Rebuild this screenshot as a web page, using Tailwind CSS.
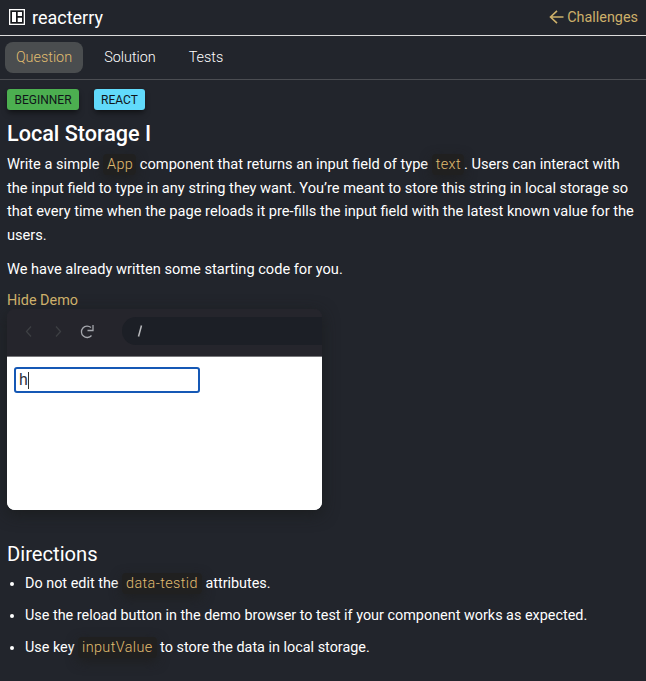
<!DOCTYPE html>
<html lang="en">
<head>
<meta charset="utf-8">
<title>reacterry</title>
<script src="https://cdn.jsdelivr.net/npm/@tailwindcss/browser@4"></script>
</head>
<body class="bg-[#22252c] text-white font-[Roboto,sans-serif] text-[14.4px] h-[681px] overflow-hidden">
<header class="h-9 border-b border-[#dcdcdc] flex items-center justify-between pl-[9px] pr-2">
  <div class="flex items-center gap-[7px]">
    <svg class="w-4 h-4 mb-px" viewBox="0 0 16 16"><path fill="#fff" d="M0 0h16v16H0z"/><path fill="#15171b" d="M1.300 1.300h13.400v13.400H1.300z"/><path fill="#fff" d="M3 3h4v10H3zM8.700 3H13v4H8.700zM8.700 8.700H13V13H8.700z"/></svg>
    <span class="text-[18px] leading-9">reacterry</span>
  </div>
  <a class="flex items-center gap-[3px] text-[#cdb06a] text-[14.4px]">
    <svg class="w-[15px] h-[14px]" viewBox="0 0 15 14" fill="none" stroke="currentColor" stroke-width="1.6"><path d="M14.500 7H1.500M8 .8L1.500 7L8 13.200"/></svg>
    <span>Challenges</span>
  </a>
</header>
<nav class="h-11 border-b border-[#4b4d52] flex items-center pl-[5px] font-light">
  <a class="w-[78px] h-[31px] rounded-lg bg-[#4a4d4f] text-[#e0bd70] flex items-center justify-center">Question</a>
  <a class="w-[94px] text-center text-white">Solution</a>
  <a class="w-[58px] text-center text-white">Tests</a>
</nav>
<main class="pl-[7px] pr-[7px] pt-[9px]">
  <div class="flex gap-[15px] text-[12px] text-[#10151a]">
    <span class="w-[72px] h-[21px] rounded-[3px] bg-[#4caf50] flex items-center justify-center shadow-md shadow-black/40">BEGINNER</span>
    <span class="w-[51px] h-[21px] rounded-[3px] bg-[#61dafb] flex items-center justify-center shadow-md shadow-black/40">REACT</span>
  </div>
  <h1 class="mt-[10px] h-7 leading-7 text-[21.6px] font-medium">Local Storage I</h1>
  <p class="mt-[5.3px] leading-[23.4px] text-[14.62px] whitespace-nowrap">Write a simple <code class="font-[Roboto,sans-serif] font-light text-[14.4px] tracking-[0.4px] text-[#e0bd70] bg-[#202020] rounded pl-1 pr-[3px] py-[2px] shadow-[0_4px_12px_rgba(30,30,30,0.8)]">App</code> component that returns an input field of type <code class="font-[Roboto,sans-serif] font-light text-[14.4px] tracking-[0.4px] text-[#e0bd70] bg-[#202020] rounded pl-1 pr-[3px] py-[2px] shadow-[0_4px_12px_rgba(30,30,30,0.8)]">text</code>. Users can interact with<br>the input field to type in any string they want. You’re meant to store this string in local storage so<br>that every time when the page reloads it pre-fills the input field with the latest known value for the<br>users.</p>
  <p class="mt-[10.7px] leading-[23.4px] text-[14.6px]">We have already written some starting code for you.</p>
  <a class="block mt-2 leading-[23px] h-[20px] text-[#cdb06a]">Hide Demo</a>
  <div class="w-[315px] h-[201px] rounded-lg bg-linear-to-b from-[#25252c] from-50% to-white to-50% shadow-[0_4px_16px_rgba(25,28,28,0.8)] overflow-hidden">
    <div class="h-12 bg-[#25252c] border-b border-[#77777a] flex items-center pb-1">
      <svg class="w-[115px] h-[28px]" viewBox="0 0 115 28" fill="none" stroke-width="1.3"><path stroke="#3d3f43" d="M24 9.500L19.500 14.500L24 19.500M49 9.500L53.500 14.500L49 19.500"/><path stroke="#a5a7ad" stroke-width="1.3" d="M84 10.600A5.700 5.700 0 1 0 84.500 18.500M86 8v5.500h-5.500"/></svg>
      <div class="flex-1 h-7 bg-[#1c1f26] rounded-l-full pl-[15px] flex items-center"><svg class="w-[7px] h-[14px]" viewBox="0 0 7 14" fill="none" stroke="#b8b9bc" stroke-width="1.5"><path d="M4.500 1.500L1.500 12.500"/></svg></div>
    </div>
    <div class="h-[153px] bg-white pt-[10px] pl-[7px]">
      <div class="w-[186px] h-[26px] border-2 border-[#1558b5] rounded-[3px] flex items-center pl-[3px] text-[#30343b] text-[16px]"><span>h</span><span class="w-px h-[17px] bg-[#333]"></span></div>
    </div>
  </div>
  <h2 class="mt-[30px] h-[28px] leading-[28px] text-[20.2px]">Directions</h2>
  <ul class="mt-1 pl-[18px] list-disc flex flex-col gap-[9px] leading-[23px]">
    <li>Do not edit the <code class="font-[Roboto,sans-serif] font-light tracking-[0.4px] text-[#e0bd70] bg-[#202020] rounded pl-1 pr-[4px] py-[2px] shadow-[0_4px_12px_rgba(30,30,30,0.8)]">data-testid</code> attributes.</li>
    <li>Use the reload button in the demo browser to test if your component works as expected.</li>
    <li>Use key <code class="font-[Roboto,sans-serif] font-light tracking-[0.4px] text-[#e0bd70] bg-[#202020] rounded pl-1 pr-[4px] py-[2px] shadow-[0_4px_12px_rgba(30,30,30,0.8)]">inputValue</code> to store the data in local storage.</li>
  </ul>
</main>
</body>
</html>
